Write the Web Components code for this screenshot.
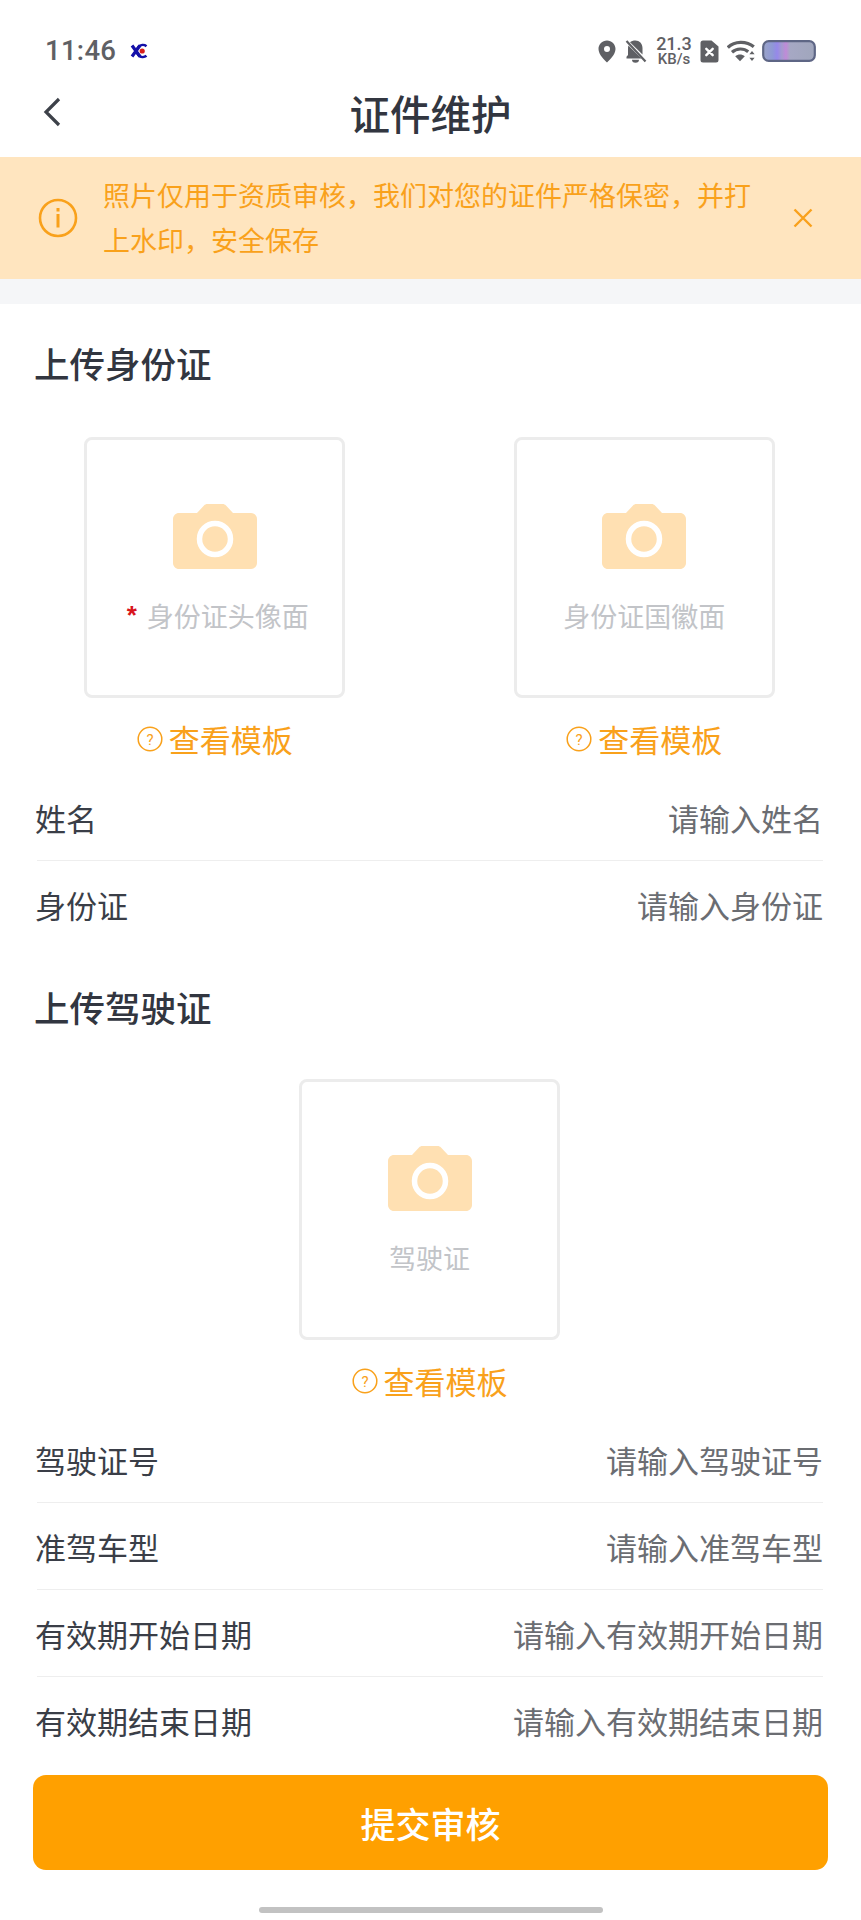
<!doctype html>
<html lang="zh-CN"><head><meta charset="utf-8"><title>证件维护</title>
<style>
html,body{margin:0;padding:0;background:#fff}
body{width:861px;height:1920px;overflow:hidden;font-family:"Noto Sans CJK SC","Noto Sans",sans-serif;display:flex;flex-direction:column}
</style></head><body>
<x-status></x-status>
<x-nav>证件维护</x-nav>
<x-notice>照片仅用于资质审核，我们对您的证件严格保密，并打上水印，安全保存</x-notice>
<x-band></x-band>
<x-heading style="margin-top:34px">上传身份证</x-heading>
<x-upload-row style="margin-top:49px">
  <x-upload required>身份证头像面</x-upload>
  <x-upload>身份证国徽面</x-upload>
</x-upload-row>
<x-field style="margin-top:13px" label="姓名" hint="请输入姓名" divider></x-field>
<x-field label="身份证" hint="请输入身份证"></x-field>
<x-heading style="margin-top:34px">上传驾驶证</x-heading>
<x-upload-row style="margin-top:47px">
  <x-upload>驾驶证</x-upload>
</x-upload-row>
<x-field style="margin-top:13px" label="驾驶证号" hint="请输入驾驶证号" divider></x-field>
<x-field label="准驾车型" hint="请输入准驾车型" divider></x-field>
<x-field label="有效期开始日期" hint="请输入有效期开始日期" divider></x-field>
<x-field label="有效期结束日期" hint="请输入有效期结束日期"></x-field>
<x-submit>提交审核</x-submit>
<x-homebar></x-homebar>
<script>
function def(name, html, init){
  customElements.define(name, class extends HTMLElement{
    constructor(){super();this.attachShadow({mode:'open'}).innerHTML=html;}
    connectedCallback(){ if(init) init(this,this.shadowRoot); }
  });
}
const C='#F9A11B';
def('x-status',`<style>
:host{display:flex;align-items:center;height:50px;padding:26px 45px 0 45px;box-sizing:content-box;color:#5f6064;flex:none}
.t{font:500 27.5px/50px Roboto,sans-serif;letter-spacing:.3px;width:85px}
.sp{flex:1}
svg{display:block;flex:none}
.sp2{display:flex;align-items:center}
.net{font:500 15px/15px Roboto,sans-serif;text-align:center;width:36px;margin:0 8px 0 9px;color:#5f6064}
.net b{display:block;font:500 18px/17px Roboto,sans-serif}
</style>
<span class="t">11:46</span>
<svg width="18" height="16" viewBox="0 0 18 16"><path d="M2 2.5 L10 13.5 M10 2.5 L2 13.5" stroke="#1410a8" stroke-width="3.2" fill="none"/><path d="M16.5 3.2 A6 6 0 1 0 16.5 12.8" stroke="#1410a8" stroke-width="2.6" fill="none"/><circle cx="12.2" cy="8" r="2.6" fill="#d8201c"/></svg>
<span class="sp"></span>
<span class="sp2">
<svg width="18" height="23" viewBox="0 0 18 23"><path fill-rule="evenodd" fill="#5f6064" d="M9 0.5C4.2 .5 .5 4.2 .5 9c0 5.5 6.3 11.6 8.5 13.5C11.2 20.6 17.500 14.500 17.500 9 17.500 4.200 13.800 .5 9 .5zM9 6a3 3 0 1 1 0 6 3 3 0 0 1 0-6z"/></svg>
<svg style="margin-left:9px" width="22" height="23" viewBox="0 0 22 23"><path fill="#5f6064" d="M10.500 .5c3.800 0 7 3 7 7.500v6.500L5 2.300C6.200 1.100 8.200 .5 10.500 .5zM3.400 5.600 16.500 18.500H1.500v-1.800L3 15V9c0-1.300.1-2.400.4-3.400zM7 19.800h7a3.500 3 0 0 1-7 0z"/><path d="M1.500 1 20.500 21.500" stroke="#5f6064" stroke-width="2.200"/></svg>
<span class="net"><b>21.3</b>KB/s</span>
<svg width="19" height="23" viewBox="0 0 19 23"><path fill-rule="evenodd" fill="#5f6064" d="M3 .5h8.500L18.500 6.500V20a2.500 2.500 0 0 1-2.500 2.500H3A2.500 2.500 0 0 1 .5 20V3A2.500 2.500 0 0 1 3 .5z"/><path d="M6.300 8.800 12.700 15.200M12.700 8.800 6.300 15.200" stroke="#fff" stroke-width="2.400" stroke-linecap="round"/></svg>
<svg style="margin-left:8px" width="28" height="22" viewBox="0 0 28 22"><g fill="none" stroke="#5f6064" stroke-width="3.200"><path d="M.8 7.500C7.500 .8 19.500 .8 26.800 6.800"/><path d="M5 12.300C9.800 8 16.800 8 21.200 11.800"/></g><path d="M8.200 16.300C11 14 15 14 17.800 16.300L13 21.300z" fill="#5f6064"/><path d="M25 11 22.400 14.300h5.200zM25 21 22.400 17.700h5.200z" fill="#5f6064"/></svg>
<svg style="margin-left:7px" width="54" height="22" viewBox="0 0 54 22"><defs><linearGradient id="b" x1="0" x2="1" y1="0" y2="0"><stop offset="0" stop-color="#9aa4c8"/><stop offset=".18" stop-color="#8f98d6"/><stop offset=".27" stop-color="#9688ea"/><stop offset=".36" stop-color="#a59ad0"/><stop offset=".44" stop-color="#c08ad8"/><stop offset=".52" stop-color="#a6a8c4"/><stop offset="1" stop-color="#a0a6bc"/></linearGradient></defs><rect x="1.200" y="1.200" width="51.600" height="19.600" rx="5.500" fill="url(#b)" stroke="#5e6685" stroke-width="2.200"/></svg>
</span>`);
def('x-nav',`<style>
:host{display:flex;align-items:center;justify-content:center;position:relative;height:72px;padding-bottom:9px;flex:none;color:#323640;font-size:40.500px;font-weight:500}
svg{position:absolute;left:42px;top:21px}
</style><svg width="20" height="30" viewBox="0 0 20 30"><path d="M17 2 4 15l13 13" fill="none" stroke="#3d4149" stroke-width="3.200"/></svg><slot></slot>`);
def('x-notice',`<style>
:host{display:flex;align-items:center;height:122px;background:#FFE5BF;color:${C};flex:none;padding:0 48px 0 38px;box-sizing:border-box}
.i{flex:none;margin-right:25px}
.txt{flex:1;font-size:27px;line-height:45px;width:650px;position:relative;top:-1px}
.x{flex:none;margin-left:32px}
</style>
<svg class="i" width="40" height="40" viewBox="0 0 40 40"><circle cx="20" cy="20" r="18" fill="none" stroke="${C}" stroke-width="2.600"/><rect x="18.500" y="10" width="3" height="3.500" fill="${C}"/><rect x="18.500" y="16" width="3" height="13.500" fill="${C}"/></svg>
<div class="txt"><slot></slot></div>
<svg class="x" width="20" height="20" viewBox="0 0 20 20"><path d="M1.500 1.500 18.500 18.500M18.500 1.500 1.500 18.500" stroke="${C}" stroke-width="2.400"/></svg>`);
def('x-band',`<style>:host{display:block;height:25px;background:#F5F6F8;flex:none}</style>`);
def('x-heading',`<style>:host{display:block;height:50px;line-height:50px;padding-left:34px;font-size:35.500px;font-weight:500;color:#323640;flex:none}</style><slot></slot>`);
def('x-upload-row',`<style>:host{display:flex;justify-content:space-around;flex:none;padding-right:2px}</style><slot></slot>`);
def('x-upload',`<style>
:host{display:flex;flex-direction:column;align-items:center;width:261px}
.card{box-sizing:border-box;width:261px;height:261px;border:3px solid #ECECEC;border-radius:8px;display:flex;flex-direction:column;align-items:center}
svg.cam{margin-top:64px;display:block}
.lab{margin-top:27px;font-size:27px;line-height:40px;color:#C2C4C8;display:flex;align-items:center;white-space:nowrap}
.req{color:#D8141C;font:700 26px/26px "Liberation Sans",sans-serif;margin-right:10px;position:relative;top:-1px}
:host([required]) .lab{padding-left:6px}
.link{display:flex;align-items:center;height:44px;margin-top:19px;color:${C};font-size:31px;line-height:44px}
.link svg{margin-right:6px;display:block}
</style>
<div class="card">
<svg class="cam" width="84" height="65" viewBox="0 0 84 65"><path fill="#FFE0B2" d="M6 9h18L31 1.500C32 .5 33 0 34.500 0h15c1.500 0 2.500.5 3.500 1.500L60 9h18c3.300 0 6 2.700 6 6v44c0 3.300-2.700 6-6 6H6c-3.300 0-6-2.700-6-6V15c0-3.300 2.700-6 6-6z"/><circle cx="42" cy="35" r="15.500" fill="none" stroke="#fff" stroke-width="5.500"/></svg>
<div class="lab"><span class="req" hidden>*</span><slot></slot></div>
</div>
<div class="link"><svg width="26" height="26" viewBox="0 0 26 26"><circle cx="13" cy="13" r="11.800" fill="none" stroke="${C}" stroke-width="1.500"/><text x="13" y="18.500" text-anchor="middle" font-family="Roboto,sans-serif" font-size="15" fill="${C}">?</text></svg>查看模板</div>`,
(el,s)=>{ if(el.hasAttribute('required')) s.querySelector('.req').hidden=false; });
def('x-field',`<style>
:host{display:block;margin:0 38px 0 35px;flex:none}
.r{display:flex;justify-content:space-between;align-items:center;height:86px;font-size:31px}
.l{color:#3A3E47}.h{color:#6b6d72}
.d{height:1px;background:#EEEEEE;margin-left:2px}
</style><div class="r"><span class="l"></span><span class="h"></span></div><div class="d"></div>`,
(el,s)=>{ s.querySelector('.l').textContent=el.getAttribute('label'); s.querySelector('.h').textContent=el.getAttribute('hint'); if(!el.hasAttribute('divider')) s.querySelector('.d').style.background='transparent'; });
def('x-submit',`<style>
:host{display:flex;align-items:center;justify-content:center;flex:none;margin:11px 33px 0;height:95px;background:#FFA000;border-radius:13px;color:#fff;font-size:35px;font-weight:500}
</style><slot></slot>`);
def('x-homebar',`<style>:host{display:block;flex:none;width:344px;height:6px;background:#C2C2C2;border-radius:3px;margin:37px auto 0}</style>`);
</script>
</body></html>
